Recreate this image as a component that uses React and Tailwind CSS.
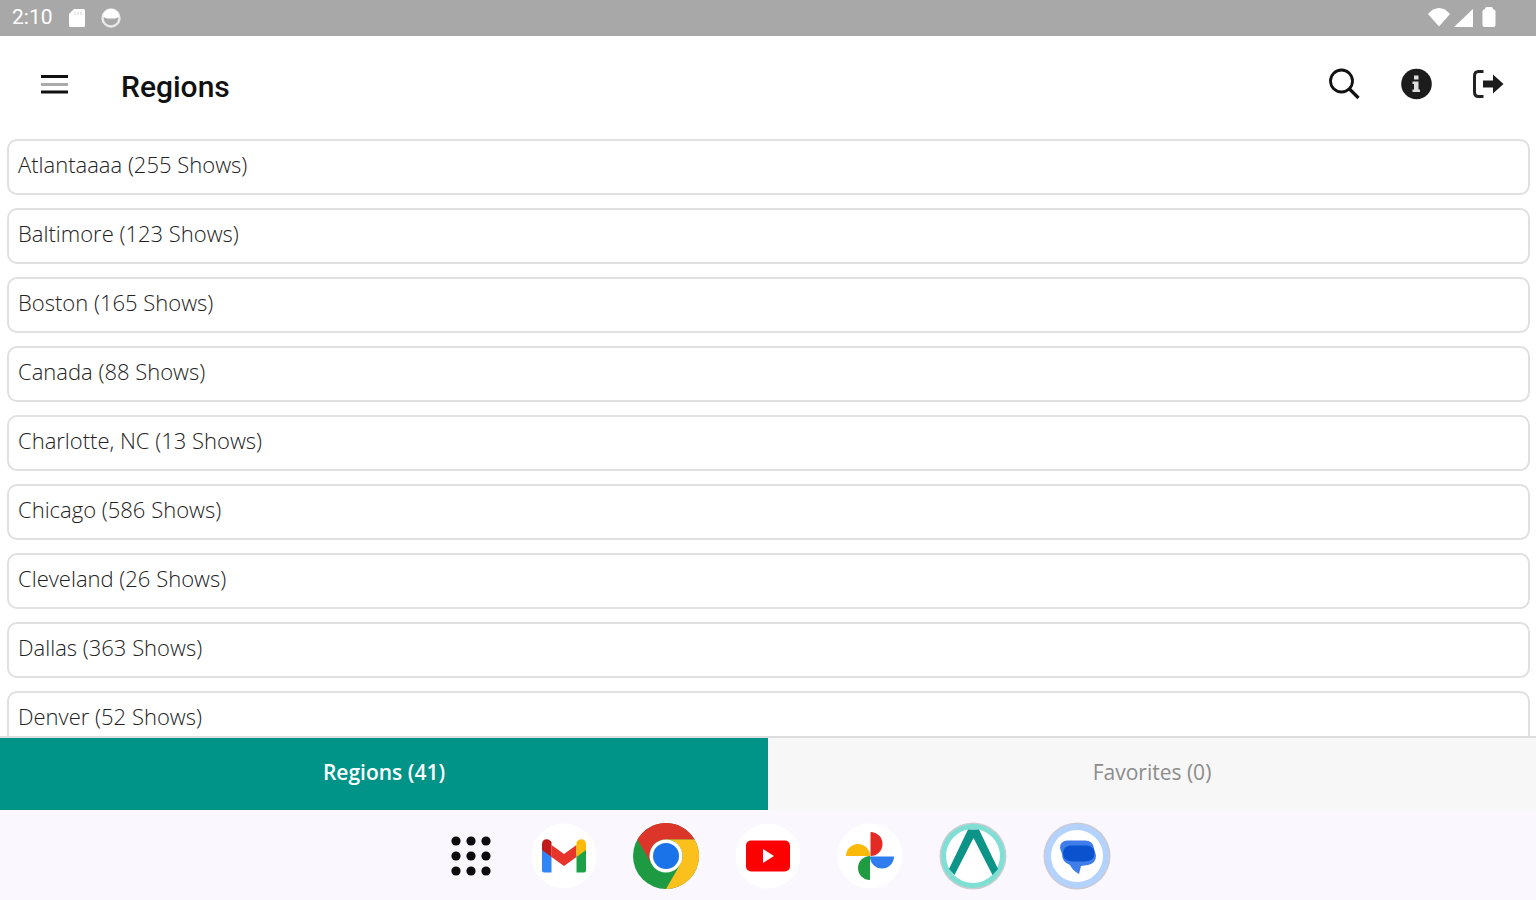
import React from 'react'

const regions = [
  { name: 'Atlantaaaa', shows: 255 },
  { name: 'Baltimore', shows: 123 },
  { name: 'Boston', shows: 165 },
  { name: 'Canada', shows: 88 },
  { name: 'Charlotte, NC', shows: 13 },
  { name: 'Chicago', shows: 586 },
  { name: 'Cleveland', shows: 26 },
  { name: 'Dallas', shows: 363 },
  { name: 'Denver', shows: 52 }
]

function StatusBar() {
  return (
    <div className="h-9 shrink-0 bg-[#a8a8a8] text-white flex items-center justify-between pl-3 pr-9">
      <div className="flex items-center gap-4">
        <span className="font-['Roboto',sans-serif] text-[21px]">2:10</span>
        <svg className="w-4 h-5" viewBox="0 0 16 20" fill="currentColor">
          <path d="M5 1h9.500a1.500 1.500 0 0 1 1.500 1.500v15a1.500 1.500 0 0 1-1.500 1.500h-13A1.500 1.500 0 0 1 0 17.500V6z" />
          <path d="M6 4v3M9 4v3M12 4v3" stroke="#d4d4d4" strokeWidth="1" />
        </svg>
        <svg className="w-5 h-5" viewBox="0 0 20 20" fill="none" stroke="currentColor">
          <circle cx="10" cy="10" r="8.500" strokeWidth="2.400" opacity="0.75" />
          <path d="M2 9a8 8 0 0 1 16 0l-4 1.500H6z" fill="currentColor" stroke="none" />
        </svg>
      </div>
      <div className="flex items-center gap-1">
        <svg className="w-[22px] h-5" viewBox="0 0 22 20" fill="currentColor">
          <path d="M11 18.500 0 6Q5 0 11 0t11 6z" />
        </svg>
        <svg className="w-5 h-5" viewBox="0 0 20 20" fill="currentColor">
          <path d="M0 19 19 1v18z" />
        </svg>
        <svg className="w-[22px] h-[22px]" viewBox="0 0 22 22" fill="currentColor">
          <path d="M8 0h6l1.500 2.500a2 2 0 0 1 2 2V18a2 2 0 0 1-2 2h-9a2 2 0 0 1-2-2V4.500a2 2 0 0 1 2-2z" />
        </svg>
      </div>
    </div>
  )
}

function Header() {
  return (
    <header className="h-24 shrink-0 flex items-center justify-between pl-10 pr-8 text-[#111]">
      <div className="flex items-center gap-[53px]">
        <button type="button" aria-label="Menu">
          <svg className="w-7 h-6" viewBox="0 0 28 24" strokeWidth="3">
            <path d="M1 4.500h27M1 20h27" stroke="#111" />
            <path d="M1 12.500h27" stroke="#aaa" />
          </svg>
        </button>
        <h1 className="font-['Roboto',sans-serif] font-medium text-[30px] pt-1">Regions</h1>
      </div>
      <div className="flex items-center gap-10">
        <button type="button" aria-label="Search">
          <svg className="w-8 h-8" viewBox="0 0 32 32" fill="none" stroke="currentColor">
            <circle cx="13.500" cy="13" r="11" strokeWidth="2.800" />
            <path d="m21.500 21 9 9" strokeWidth="3.200" />
          </svg>
        </button>
        <button type="button" aria-label="Info">
          <svg className="w-8 h-8" viewBox="0 0 32 32">
            <circle cx="16.500" cy="16" r="15.300" fill="#1c1c1c" />
            <path d="M14 7.500h4.500v4H14zM12.500 13.500h6v8h1.500V24h-7.500v-2.500H14V16h-1.500z" fill="#ddd" />
          </svg>
        </button>
        <button type="button" aria-label="Log out">
          <svg className="w-8 h-8" viewBox="0 0 32 32">
            <path d="M11.500 3.500H6.500Q2.500 3.500 2.500 8v16q0 4.500 4 4.500h5" fill="none" stroke="#222" strokeWidth="3" />
            <path d="M11 12.500h10V6.500L31.500 16 21 25.500v-6H11z" fill="#1c1c1c" />
          </svg>
        </button>
      </div>
    </header>
  )
}

function RegionList() {
  return (
    <ul className="flex-1 min-h-0 overflow-hidden flex flex-col gap-[13px] pt-[7px] pl-[7px] pr-[6px]">
      {regions.map((region) => (
        <li key={region.name} className="shrink-0">
          <a
            href="#"
            className="h-14 flex items-center pb-1.5 px-[9px] border-2 border-[#e0e0e0] rounded-[10px] text-[22px] font-light text-[#222]"
          >
            {`${region.name} (${region.shows} Shows)`}
          </a>
        </li>
      ))}
    </ul>
  )
}

function TabBar() {
  return (
    <div role="tablist" className="h-[74px] shrink-0 grid grid-cols-2 border-t-2 border-[#dedede] text-[21px]">
      <button type="button" role="tab" aria-selected="true" className="bg-[#009388] text-white font-semibold pb-0.5">
        Regions (41)
      </button>
      <button type="button" role="tab" aria-selected="false" className="bg-[#f7f7f7] text-[#8c8c8c] pb-0.5">
        Favorites (0)
      </button>
    </div>
  )
}

function GmailIcon() {
  return (
    <svg className="w-[66px] h-[66px]" viewBox="0 0 66 66">
      <circle cx="33" cy="33" r="32.500" fill="#fff" />
      <path d="M11 26v21.500q0 2 2 2h7.500V33z" fill="#3186f5" />
      <path d="M55 26v21.500q0 2-2 2h-7.500V33z" fill="#1da047" />
      <path d="M20.500 22v12L33 43l12.500-9V22L33 31z" fill="#e8352b" />
      <path d="M11 21c0-5 5-6 8-3.500l1.500 1.500v15L11 27z" fill="#c01a1a" />
      <path d="M55 21c0-5-5-6-8-3.500L45.500 19v15l9.500-7z" fill="#fbb90a" />
    </svg>
  )
}

function ChromeIcon() {
  return (
    <svg className="w-[66px] h-[66px]" viewBox="0 0 66 66">
      <circle cx="33" cy="33" r="33" fill="#1e9a43" />
      <path d="M4.400 16.500A33 33 0 0 1 61.600 16.500H33A16.500 16.500 0 0 0 18.700 41.250z" fill="#dc3529" />
      <path d="M61.600 16.500A33 33 0 0 1 33 66L47.300 41.250A16.500 16.500 0 0 0 33 16.500z" fill="#fcc01c" />
      <circle cx="33" cy="33" r="16.500" fill="#fff" />
      <circle cx="33" cy="33" r="13" fill="#1a73e8" />
    </svg>
  )
}

function YoutubeIcon() {
  return (
    <svg className="w-[66px] h-[66px]" viewBox="0 0 66 66">
      <circle cx="33" cy="33" r="32.500" fill="#fff" />
      <rect x="11" y="17.500" width="44" height="31" rx="5" fill="#fe0000" />
      <path d="M28 26v14l11-7z" fill="#fff" />
    </svg>
  )
}

function PhotosIcon() {
  return (
    <svg className="w-[66px] h-[66px]" viewBox="0 0 66 66">
      <circle cx="33" cy="33" r="32.500" fill="#fff" />
      <path d="M33.500 9a12 12 0 0 1 0 24z" fill="#e52a25" />
      <path d="M57 33.500a12 12 0 0 1-24 0z" fill="#2f7cee" />
      <path d="M33 57a12 12 0 0 1 0-24z" fill="#1f9c42" />
      <path d="M9 33a12 12 0 0 1 24 0z" fill="#fbb90a" />
    </svg>
  )
}

function RegionsAppIcon() {
  return (
    <svg className="w-[68px] h-[68px]" viewBox="0 0 68 68">
      <circle cx="34" cy="34" r="33.500" fill="#c9cfd0" />
      <circle cx="34" cy="34" r="32" fill="#80dfd4" />
      <circle cx="34" cy="34" r="27" fill="#fff" />
      <path d="M29 7.500h11L59 47l-5.500 6L34.500 16 15.500 53 10 47z" fill="#0d9488" />
    </svg>
  )
}

function MessagesIcon() {
  return (
    <svg className="w-[68px] h-[68px]" viewBox="0 0 68 68">
      <circle cx="34" cy="34" r="33.500" fill="#c9cad6" />
      <circle cx="34" cy="34" r="32" fill="#b3d2fd" />
      <circle cx="34" cy="34" r="26" fill="#fff" />
      <path d="M24 18.500h18q8 0 9 8l2 7q0 8-8 9.500-4 .5-7 1l-2 8q-6-3-9-9-8-3-8-11l-2-6q0-7 7-7.500z" fill="#3f7cec" />
      <path d="M27 23.500h17q7.500 1 7.500 7.500 0 8-9 8.500H29q-9-.5-9-8 0-7 7-8z" fill="#0b53ce" />
    </svg>
  )
}

function AppsGrid() {
  const dots = [5, 20, 35]
  return (
    <svg className="w-10 h-10" viewBox="0 0 40 40" fill="#0c0c0c">
      {dots.map((y) => dots.map((x) => <circle key={`${x}-${y}`} cx={x} cy={y} r="4.600" />))}
    </svg>
  )
}

const apps = [
  { label: 'Gmail', icon: GmailIcon },
  { label: 'Chrome', icon: ChromeIcon },
  { label: 'YouTube', icon: YoutubeIcon },
  { label: 'Photos', icon: PhotosIcon },
  { label: 'Regions', icon: RegionsAppIcon },
  { label: 'Messages', icon: MessagesIcon }
]

function Dock() {
  return (
    <nav className="h-[90px] shrink-0 bg-[#faf7fe] flex items-center justify-center gap-9 pl-[26px] pt-0.5">
      <button type="button" aria-label="All apps" className="mr-1">
        <AppsGrid />
      </button>
      {apps.map((app) => {
        const Icon = app.icon
        return (
          <button key={app.label} type="button" aria-label={app.label}>
            <Icon />
          </button>
        )
      })}
    </nav>
  )
}

export default function App() {
  return (
    <div className="h-screen flex flex-col bg-white font-['Open_Sans','Noto_Sans',sans-serif]">
      <StatusBar />
      <Header />
      <RegionList />
      <TabBar />
      <Dock />
    </div>
  )
}
